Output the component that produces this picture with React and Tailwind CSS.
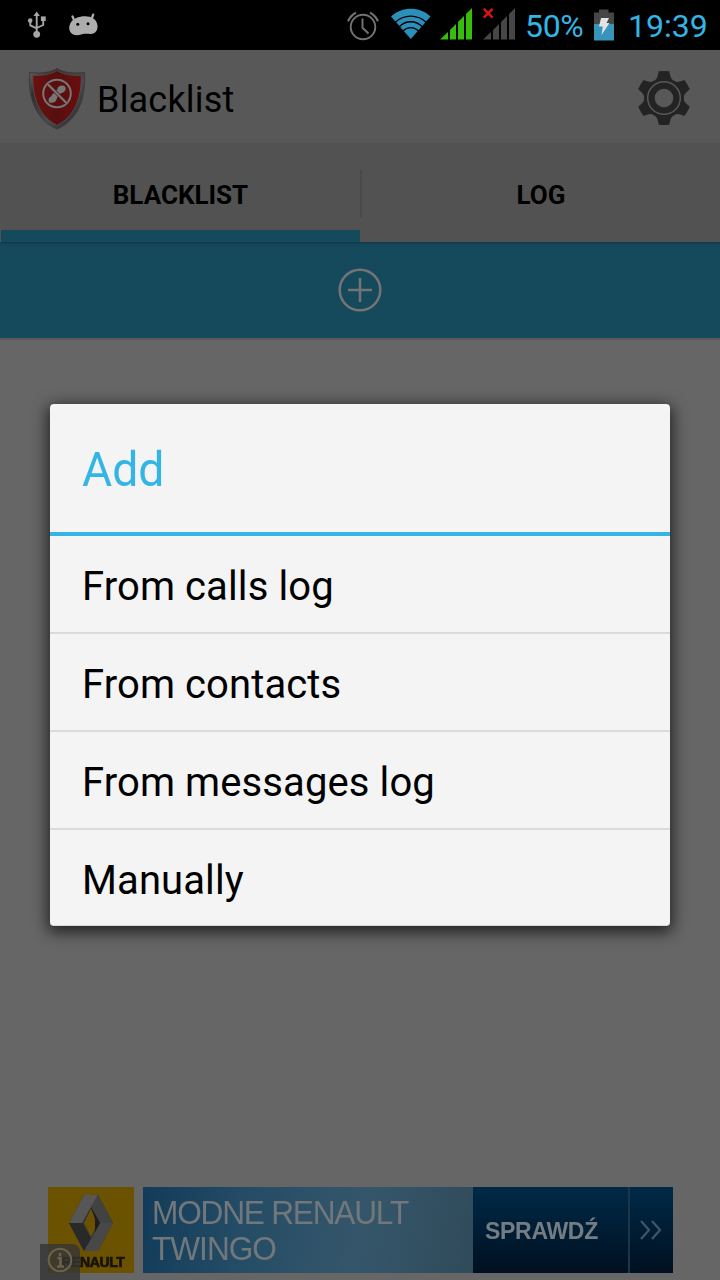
import React from 'react';

function UsbIcon() {
  return (
    <svg className="ml-[27px] h-[28px] w-[20px]" viewBox="0 0 20 28" fill="none" stroke="#a6a6a6" strokeWidth="1.9">
      <path d="M9.7 4v19M3.3 9.5v4.8l6.4 3M16.2 8v6l-6.5 3" />
      <path d="M9.7 0.6l3.2 4.4h-6.400z" fill="#a6a6a6" stroke="none" />
      <circle cx="9.7" cy="23.3" r="3.4" fill="#a6a6a6" stroke="none" />
      <circle cx="3.2" cy="9.6" r="2.300" fill="#a6a6a6" stroke="none" />
      <rect x="13.900" y="5.4" width="4.800" height="4.6" fill="#a6a6a6" stroke="none" />
    </svg>
  );
}

function DroidIcon() {
  return (
    <svg className="ml-[21px] h-[24px] w-[32px]" viewBox="0 0 32 24">
      <path d="M4.500 3.500l2.300 5M25.200 1.700l-1.700 4.500" stroke="#adadad" strokeWidth="2.300" strokeLinecap="round" />
      <path d="M1.200 14.500C1.700 9 5.500 5 12.500 3.700C21 2.200 28.500 4.500 29.500 12.500C30.100 17.500 27 21.300 22.500 21C18.500 20.700 17 20.600 14 21.300C9.500 22.600 6 22.700 3.700 20.600C1.800 18.900 1.200 17 1.200 14.500z" fill="#adadad" />
      <circle cx="9.800" cy="11.200" r="1.500" fill="#000" />
      <circle cx="20" cy="10.700" r="1.500" fill="#000" />
    </svg>
  );
}

function AlarmIcon() {
  return (
    <svg className="h-[32px] w-[32px]" viewBox="0 0 32 32" fill="none" stroke="#747474" strokeWidth="1.9">
      <circle cx="16" cy="18" r="12.300" />
      <path d="M15.500 9.500v9.300l6 5.700" />
      <path d="M1 12.300Q3.500 6.500 9 3.600M31 12.300Q28.500 6.500 23 3.600" strokeWidth="2.200" />
    </svg>
  );
}

function WifiIcon() {
  return (
    <svg className="ml-[12px] mt-[-2px] h-[32px] w-[40px]" viewBox="0 0 40 32">
      <path d="M0 8.500C11-1.800 28.500-1.800 39.500 8.500L19.800 31z" fill="#2b8fb9" />
      <g fill="none" stroke="#000" strokeWidth="1.300">
        <path d="M4 14.500C13 6 26.500 6 35.500 14.500" />
        <path d="M8 19C15 12 24.500 12 31.500 19" />
        <path d="M12 23C16.500 18.500 23 18.500 27.500 23" />
      </g>
    </svg>
  );
}

function SignalIcon({ fill, blocked }) {
  return (
    <svg className="h-[34px] w-[34px]" viewBox="0 0 34 34">
      <path fill={fill} d="M0 31.500L8 24V31.500zM10 31.500V22L16 16V31.500zM18 31.500V14L24 8V31.500zM26 31.500V6L32 0V31.500z" />
      {blocked && <path d="M.8 .8l8.800 8.800M9.600 .8L.8 9.600" stroke="#d81414" strokeWidth="2.500" />}
    </svg>
  );
}

function BatteryIcon() {
  return (
    <svg className="ml-[9px] h-[32px] w-[20px]" viewBox="0 0 20 32">
      <path d="M0 3.500h5V.5h9.500v3H20V15H0z" fill="#464646" />
      <path d="M0 15h20v16.500H0z" fill="#3795bb" />
      <path d="M7 9h8l-2.500 5H15.500L7.500 26l1.300-8.500H5z" fill="#e3e3e3" />
    </svg>
  );
}

function StatusBar() {
  return (
    <div className="flex h-[50px] items-center bg-black text-[#33b5e5]">
      <UsbIcon />
      <DroidIcon />
      <div className="ml-[247px] flex items-center">
        <AlarmIcon />
        <WifiIcon />
        <div className="ml-[9px] flex gap-[9px]">
          <SignalIcon fill="#37bd0b" />
          <SignalIcon fill="#464646" blocked />
        </div>
        <span className="ml-[8px] w-[60px] whitespace-nowrap pt-[2px] text-[32px] leading-none tracking-[-0.3px]">50%</span>
        <BatteryIcon />
        <span className="ml-[14px] whitespace-nowrap pt-[2px] text-[32px] leading-none">19:39</span>
      </div>
    </div>
  );
}

function ShieldIcon() {
  return (
    <svg className="mt-[6px] h-[64px] w-[58px]" viewBox="0 0 58 64">
      <defs>
        <linearGradient id="rim" x1="0" x2="1" y1="0" y2="1">
          <stop offset="0" stopColor="#666" />
          <stop offset=".25" stopColor="#303030" />
          <stop offset=".6" stopColor="#4a4a4a" />
          <stop offset="1" stopColor="#222" />
        </linearGradient>
        <linearGradient id="shield" x1="0" x2="1">
          <stop offset="0" stopColor="#6b1010" />
          <stop offset=".5" stopColor="#570f0f" />
          <stop offset="1" stopColor="#6c0d0d" />
        </linearGradient>
      </defs>
      <path d="M29 1.500C22 6 12 6.500 1.500 5.500C0 32 8 53 29 62C50 53 58 32 56.500 5.500C46 6.500 36 6 29 1.500z" fill="url(#rim)" stroke="#3c3c3c" />
      <path d="M29 3.500C22 7.800 13 8.700 4.800 8.300C4.300 32 12 50 29 58.300C46 50 53.700 32 53.200 8.300C45 8.700 36 7.800 29 3.500z" fill="url(#shield)" stroke="#555" strokeWidth=".7" />
      <circle cx="29" cy="26.500" r="13.800" fill="none" stroke="#777" strokeWidth="2" />
      <path d="M37 19.500C34 17.500 29.500 19 29.300 22.500C26.500 25 24 27.500 23 29.700C20.500 30 20 33.500 21.300 35.500C25 36.500 28.500 34.800 28.800 31.500C29.500 29.300 31.500 27.300 33.500 26C36.500 26 38.800 22 37 19.500z" fill="#777" />
      <path d="M19.500 17l19 19" stroke="#5b1010" strokeWidth="3.400" />
      <path d="M19.300 16.800l19.400 19.400" stroke="#777" strokeWidth="2.200" />
    </svg>
  );
}

function GearIcon() {
  return (
    <svg className="mt-[3px] h-[56px] w-[52px]" viewBox="-26 -28 52 56">
      <g fill="#232323">
        <circle r="20" />
        {[0, 60, 120, 180, 240, 300].map((angle) => (
          <path key={angle} d="M-8.500-18C-6.500-20-6-23-5.300-26.700Q0-27.300 5.300-26.700C6-23 6.500-20 8.500-18z" transform={`rotate(${angle})`} />
        ))}
      </g>
      <circle r="16.300" fill="none" stroke="#585858" strokeWidth="1.500" />
      <circle r="9.300" fill="#585858" />
    </svg>
  );
}

function AppBar() {
  return (
    <header className="flex h-[93px] items-center bg-[#585858] pb-px pl-[28px] pr-[30px]">
      <ShieldIcon />
      <h1 className="ml-[11px] mt-[8px] grow whitespace-nowrap text-[36px] leading-none tracking-[0.2px]">Blacklist</h1>
      <GearIcon />
    </header>
  );
}

function Tabs() {
  return (
    <nav className="flex h-[99px] bg-[#525252] text-[26px] font-bold leading-none">
      <div className="flex w-[360px] flex-col pl-px">
        <span className="flex h-[87px] items-center justify-center pt-[17px]">BLACKLIST</span>
        <div className="h-[12px] bg-[#15495c]" />
      </div>
      <div className="mt-[27px] h-[48px] w-[2px] bg-[#494949]" />
      <span className="flex h-[87px] flex-1 items-center justify-center pt-[17px]">LOG</span>
    </nav>
  );
}

function AddBar() {
  return (
    <div className="flex h-[98px] items-center justify-center border-b-2 border-[#5a5a5a] bg-[#15495c] bg-[linear-gradient(to_bottom,#103643_0,#15455a_2px,#15495c_6px)]">
      <svg className="h-[44px] w-[44px]" viewBox="0 0 44 44" fill="none" stroke="#747474" strokeWidth="2.500">
        <circle cx="22" cy="22" r="20.300" />
        <path d="M10 22h24M22 10v24" />
      </svg>
    </div>
  );
}

function Renault() {
  return (
    <div className="flex w-[86px] flex-col items-center bg-[#6b5200] pt-[7px]">
      <svg className="h-[58px] w-[44px]" viewBox="0 0 44 58">
        <path d="M15 1h14l15 28-15 28H15L0 29z" fill="#333" />
        <path d="M15 1h14l-7 12-9 16H0z" fill="#565656" />
        <path d="M29 1l15 28H31l-9-16z" fill="#424242" />
        <path d="M0 29h13l9 16-7 12z" fill="#292929" />
        <path d="M44 29H31l-9 16-7 12h14z" fill="#484848" />
        <path d="M22 15l7 14-7 14-7-14z" fill="#6b5200" />
        <path d="M22 13l9 16-5 9V25z" fill="#1b1d1e" />
      </svg>
      <span className="mt-[3px] whitespace-nowrap pl-[4px] font-['Liberation_Sans',sans-serif] text-[14px] font-bold leading-none tracking-[-0.4px] text-[#17130a] [-webkit-text-stroke:0.7px_#17130a]">RENAULT</span>
    </div>
  );
}

function Banner() {
  return (
    <div className="relative mt-auto h-[93px] pl-[48px] font-['Liberation_Sans',sans-serif]">
      <div className="flex h-[86px] blur-[0.6px]">
        <Renault />
        <div className="ml-[9px] flex w-[330px] flex-col items-start bg-[linear-gradient(100deg,#123b59_0%,#244c66_30%,#35566a_65%,#304b5b_100%)] pl-[9px] pt-[7px] text-[34px] leading-[36px] text-[#71777a]">
          <span className="origin-left scale-x-[0.93] whitespace-nowrap tracking-[-1.3px]">MODNE RENAULT</span>
          <span className="origin-left scale-x-[0.93] whitespace-nowrap tracking-[-1.1px]">TWINGO</span>
        </div>
        <div className="flex w-[200px] items-center bg-linear-to-b from-[#002a47] via-[#001d34] to-[#001020] text-[#747d84]">
          <span className="w-[155px] whitespace-nowrap pl-[12px] pt-[2px] text-[23px] font-bold leading-none tracking-[-0.3px]">SPRAWDŹ</span>
          <div className="flex h-full w-[45px] items-center justify-center border-l-2 border-[#1b3549]">
            <svg className="mr-[2px] h-[20px] w-[24px]" viewBox="0 0 24 20" fill="none" stroke="#405668" strokeWidth="2.200">
              <path d="M2 1l8 9-8 9M13 1l8 9-8 9" />
            </svg>
          </div>
        </div>
      </div>
      <div className="absolute bottom-0 left-[40px] flex h-[36px] w-[40px] items-center justify-center rounded-tr-lg bg-[#343434]/80">
        <svg className="mt-[-4px] h-[26px] w-[26px]" viewBox="0 0 26 26" fill="none" stroke="#686250" strokeWidth="2">
          <circle cx="13" cy="13" r="11.300" />
          <path d="M10.500 11H13.500V19M10 19.500h7M13 6v3" strokeWidth="2.500" />
        </svg>
      </div>
    </div>
  );
}

const choices = ['From calls log', 'From contacts', 'From messages log', 'Manually'];

function AddDialog() {
  return (
    <div className="absolute left-[50px] top-[404px] h-[522px] w-[620px] overflow-hidden rounded-[4px] border-b border-[#d8d8d8] bg-[#f4f4f4] shadow-[0_4px_16px_2px_rgba(0,0,0,0.7)]">
      <h2 className="flex h-[132px] items-center border-b-4 border-[#33b5e5] pl-[32px] pt-[3px] text-[48px] leading-none text-[#33b5e5]">
        <span className="origin-left scale-x-[0.965]">Add</span>
      </h2>
      <ul className="divide-y-2 divide-[#dadada]">
        {choices.map((choice) => (
          <li key={choice} className="flex h-[98px] items-center pl-[32px] pt-[6px] text-[40px] leading-none last:pt-[4px]">
            <span className="whitespace-nowrap tracking-[0.1px]">{choice}</span>
          </li>
        ))}
      </ul>
    </div>
  );
}

export default function App() {
  return (
    <main className="relative flex h-[1280px] w-[720px] flex-col overflow-hidden bg-[#666] font-[Roboto,sans-serif] text-black">
      <StatusBar />
      <AppBar />
      <Tabs />
      <AddBar />
      <Banner />
      <AddDialog />
    </main>
  );
}
